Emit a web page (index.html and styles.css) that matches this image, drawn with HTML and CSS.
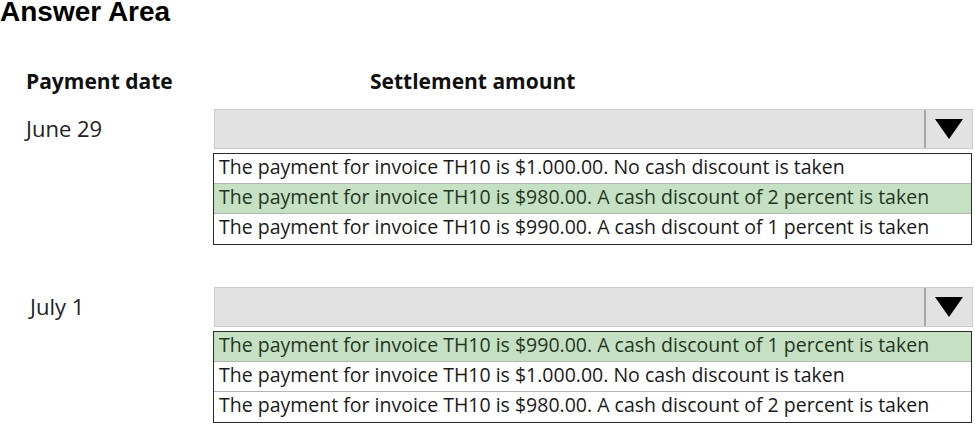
FILE: index.html
```html
<!DOCTYPE html>
<html lang="en">
<head>
    <meta charset="UTF-8">
    <meta name="viewport" content="width=device-width, initial-scale=1.0">
    <title>Answer Area</title>
    <link rel="stylesheet" href="styles.css">
</head>
<body>
    <h1 class="title">Answer Area</h1>

    <div class="sheet">
        <div class="row head">
            <div class="head-date">Payment date</div>
            <div class="head-amount">Settlement amount</div>
        </div>

        <div class="row question">
            <div class="date">June 29</div>
            <div class="dropdown">
                <div class="select">
                    <div class="select-value"></div>
                    <div class="select-arrow">
                        <svg width="28" height="20" viewBox="0 0 28 20"><polygon points="0,0 28,0 14,20" fill="#000"/></svg>
                    </div>
                </div>
                <ul class="options">
                    <li>The payment for invoice TH10 is $1.000.00. No cash discount is taken</li>
                    <li class="chosen">The payment for invoice TH10 is $980.00. A cash discount of 2 percent is taken</li>
                    <li>The payment for invoice TH10 is $990.00. A cash discount of 1 percent is taken</li>
                </ul>
            </div>
        </div>

        <div class="row question">
            <div class="date indent">July 1</div>
            <div class="dropdown">
                <div class="select">
                    <div class="select-value"></div>
                    <div class="select-arrow">
                        <svg width="28" height="20" viewBox="0 0 28 20"><polygon points="0,0 28,0 14,20" fill="#000"/></svg>
                    </div>
                </div>
                <ul class="options">
                    <li class="chosen">The payment for invoice TH10 is $990.00. A cash discount of 1 percent is taken</li>
                    <li>The payment for invoice TH10 is $1.000.00. No cash discount is taken</li>
                    <li>The payment for invoice TH10 is $980.00. A cash discount of 2 percent is taken</li>
                </ul>
            </div>
        </div>
    </div>
</body>
</html>
```

FILE: styles.css
```css
body {
    font-family: "Open Sans", sans-serif;
    background-color: #fff;
    color: #1a1a1a;
    margin: 0;
    padding: 0;
}

.title {
    font-family: "Liberation Sans", Arial, sans-serif;
    font-size: 28px;
    line-height: 24px;
    font-weight: bold;
    color: #000;
    margin: 0;
}

.row {
    display: grid;
    grid-template-columns: 213px 760px;
}

.head {
    margin-top: 43px;
    font-size: 21px;
    line-height: 28px;
    font-weight: bold;
    color: #111;
}

.head-date {
    padding-left: 26px;
}

.head-amount {
    padding-left: 157px;
}

.question {
    margin-top: 14px;
}

.question + .question {
    margin-top: 42px;
}

.date {
    font-size: 22px;
    line-height: 38px;
    padding-left: 26px;
    color: #222;
}

.date.indent {
    padding-left: 30px;
}

.select {
    display: flex;
    height: 40px;
    margin-left: 1px;
    background: #e2e2e2;
    border: 1px solid #cbcbcb;
    box-sizing: border-box;
}

.select-value {
    flex: 1;
}

.select-arrow {
    width: 46px;
    border-left: 2px solid #a6a6a6;
    display: flex;
    justify-content: center;
    align-items: center;
}

.options {
    list-style: none;
    margin: 4px 1px 0 0;
    padding: 0;
    border: 1px solid #2b2b2b;
    background: #fff;
}

.options li {
    font-size: 19.5px;
    line-height: 26px;
    padding: 0 0 3px 5px;
    border-bottom: 1px solid #b5b5b5;
    white-space: nowrap;
}

.options li:last-child {
    border-bottom: none;
    padding-bottom: 4px;
}

.options li.chosen {
    background: #c6e0c3;
    color: #1f361f;
}
```
